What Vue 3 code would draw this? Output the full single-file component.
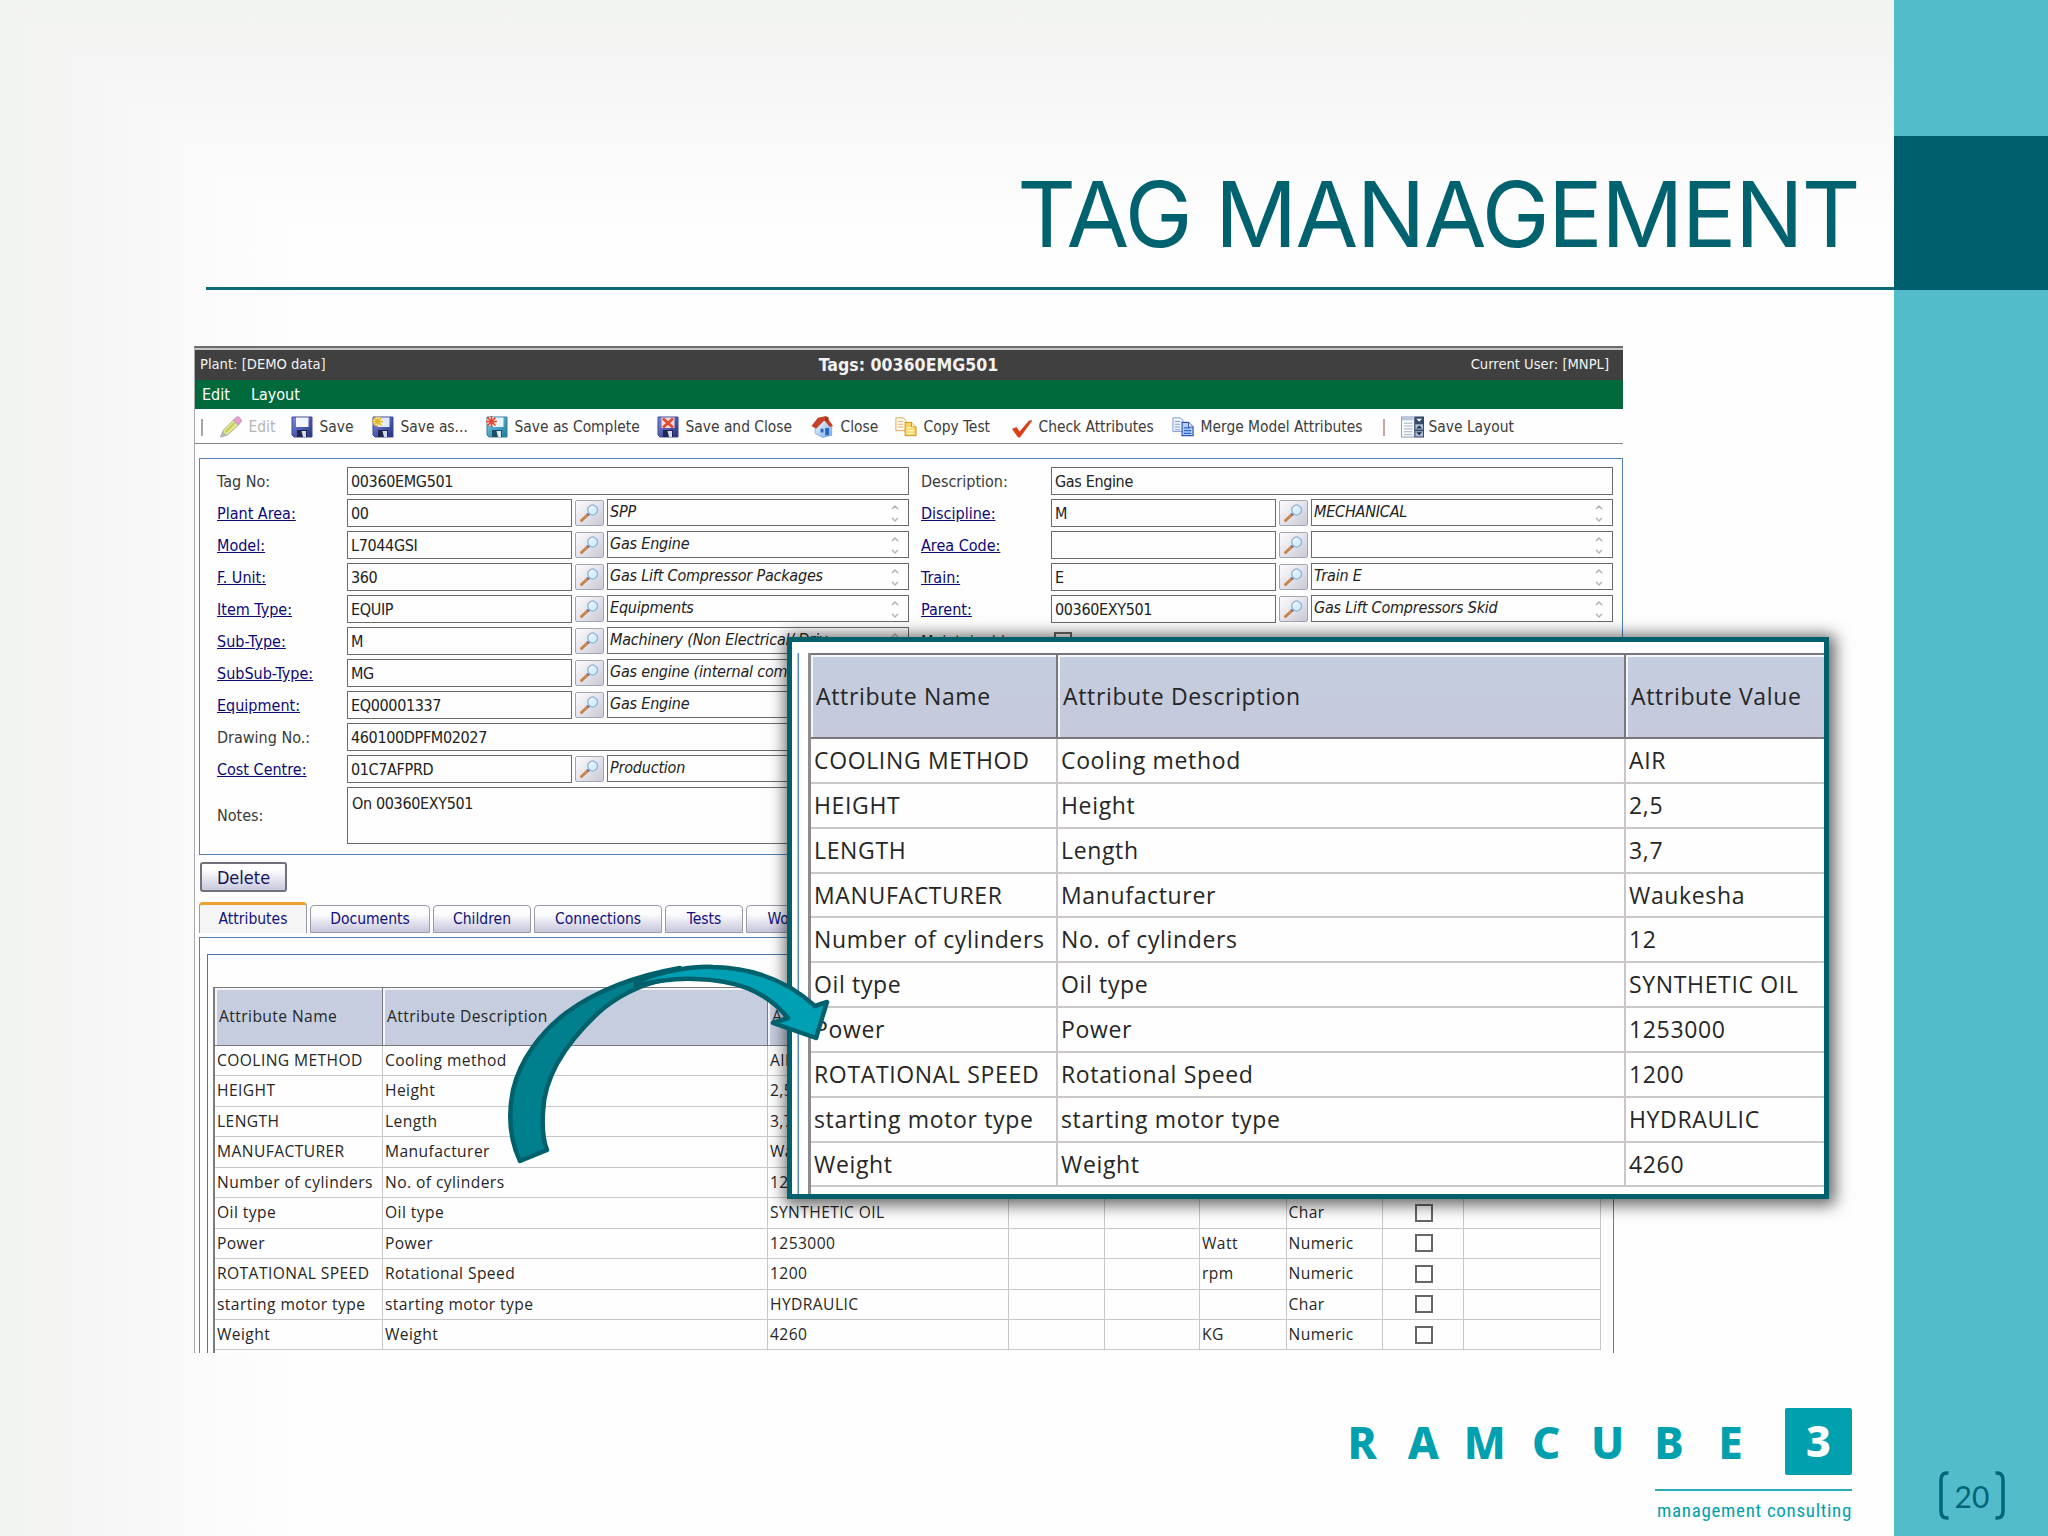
<template>
  <div class="slide">
    <!-- shared icon shapes -->
    <svg class="symbols" aria-hidden="true">
      <defs>
        <linearGradient id="disk" x1="0" y1="0" x2="1" y2="1">
          <stop offset="0" stop-color="#7d8ae0" />
          <stop offset="1" stop-color="#23307f" />
        </linearGradient>
        <linearGradient id="disk-teal" x1="0" y1="0" x2="1" y2="1">
          <stop offset="0" stop-color="#7fd0e6" />
          <stop offset="1" stop-color="#1c7a9c" />
        </linearGradient>
        <linearGradient id="house" x1="0" y1="0" x2="1" y2="1">
          <stop offset="0" stop-color="#ffffff" />
          <stop offset="1" stop-color="#6fa6e6" />
        </linearGradient>
      </defs>
      <symbol id="icon-edit" viewBox="0 0 22 22">
        <path d="M1 21 L4 14 L14 4 L19 9 L8 19 Z" fill="#e4ea8c" stroke="#a9a9a0" />
        <path d="M14 4 L17 1 Q20 0 21 3 L22 5 L19 9 Z" fill="#eb9ad6" stroke="#b79ab5" />
        <path d="M6 16 L16 6" stroke="#c2cb5c" stroke-width="2" />
        <path d="M1 21 L3.5 15.5 L7 19 Z" fill="#b5b5b5" />
      </symbol>
      <symbol id="icon-save" viewBox="0 0 22 22">
        <path d="M1 1 H21 V21 H3 L1 19 Z" fill="url(#disk)" stroke="#3a4696" />
        <path d="M5 1.500 H17.500 V11 H5 Z" fill="#f2f5fd" />
        <path d="M6 14 H16 V21 H6 Z" fill="#20264f" />
        <path d="M10.500 15 H15 V21 H12 Z" fill="#d5dbe8" />
      </symbol>
      <symbol id="icon-save-as" viewBox="0 0 22 22">
        <path d="M1 1 H21 V21 H3 L1 19 Z" fill="url(#disk)" stroke="#3a4696" />
        <path d="M5 1.500 H17.500 V11 H5 Z" fill="#e3ebfa" />
        <path d="M6 14 H16 V21 H6 Z" fill="#20264f" />
        <path d="M10.500 15 H15 V21 H12 Z" fill="#d5dbe8" />
        <circle cx="5.500" cy="5.500" r="4.500" fill="#fdf3b0" />
        <path d="M5.500 0 V11 M0 5.500 H11 M1.500 1.500 L9.500 9.500 M9.500 1.500 L1.500 9.500" stroke="#e3b72c" stroke-width="1.500" />
      </symbol>
      <symbol id="icon-save-complete" viewBox="0 0 22 22">
        <path d="M1 1 H21 V21 H3 L1 19 Z" fill="url(#disk-teal)" stroke="#347e9c" />
        <path d="M7 1.500 H17.500 V11 H7 Z" fill="#e6f5fa" />
        <path d="M6 14 H16 V21 H6 Z" fill="#1d4d66" />
        <path d="M10.500 15 H15 V21 H12 Z" fill="#dcebf0" />
        <circle cx="5.500" cy="5.500" r="4.500" fill="#fbe3d8" />
        <path d="M5.500 0 V11 M0 5.500 H11 M1.500 1.500 L9.500 9.500 M9.500 1.500 L1.500 9.500" stroke="#e0452f" stroke-width="1.600" />
      </symbol>
      <symbol id="icon-save-close" viewBox="0 0 22 22">
        <path d="M1 1 H21 V21 H3 L1 19 Z" fill="url(#disk)" stroke="#3a4696" />
        <path d="M4.500 1.500 H17.500 V12 H4.500 Z" fill="#f4dcd6" />
        <path d="M6 2.500 L16 11.500 M16 2.500 L6 11.500" stroke="#e2442c" stroke-width="2.600" />
        <path d="M6 14 H16 V21 H6 Z" fill="#20264f" />
        <path d="M10.500 15 H15 V21 H12 Z" fill="#d5dbe8" />
      </symbol>
      <symbol id="icon-home" viewBox="0 0 24 24">
        <path d="M4 11 L13 4 L22 12 V21 L12 23.500 L4 19 Z" fill="url(#house)" stroke="#6d9bd6" stroke-width=".7" />
        <path d="M0 11 L7 2 L16 0 L23.500 11 L20 12 L14 5 L5 14 Z" fill="#c5422a" />
        <path d="M15 1 H18.500 V5 H15 Z" fill="#a8321e" />
        <path d="M10 14 H13 V18 H10 Z M15 13 H19 V21 H15 Z" fill="#2464c0" />
      </symbol>
      <symbol id="icon-copy" viewBox="0 0 24 22">
        <path d="M1 1 H9 L12 4 V15 H1 Z" fill="#fffaf0" stroke="#d8a24e" />
        <path d="M3 5 H9 M3 8 H9 M3 11 H9" stroke="#dba968" />
        <path d="M11 6 H18 L23 11 V20.500 H11 Z" fill="#fbd45e" stroke="#c98f1c" />
        <path d="M18 6 V11 H23" fill="#fff0b8" stroke="#c98f1c" />
        <path d="M13 12 H20 M13 15 H21 M13 18 H21" stroke="#fff6cf" stroke-width="1.300" />
      </symbol>
      <symbol id="icon-check" viewBox="0 0 20 22">
        <path d="M0.500 13 L4.500 11.500 L7.500 16 L17 5 L20 4.500 L8 21 L6 21 Z" fill="#e23c14" stroke="#c23a14" stroke-width=".6" />
      </symbol>
      <symbol id="icon-merge" viewBox="0 0 24 22">
        <path d="M1 1 H9 L12 4 V16 H1 Z" fill="#f1f6ff" stroke="#7793cf" />
        <path d="M3 5 H9 M3 8 H9 M3 11 H9 M3 14 H9" stroke="#6f94da" />
        <path d="M11 6 H18 L23 11 V20.500 H11 Z" fill="#b5d0fa" stroke="#2d55b0" stroke-width="1.300" />
        <path d="M18 6 V11 H23" fill="#eaf2ff" stroke="#2d55b0" />
        <path d="M13 12 H20 M13 15 H21 M13 18 H21" stroke="#2f62c8" stroke-width="1.300" />
      </symbol>
      <symbol id="icon-layout" viewBox="0 0 24 22">
        <path d="M.5 .5 H14 V21.500 H.5 Z" fill="#fbfcfe" stroke="#8a96ad" />
        <path d="M1 2.500 H13" stroke="#b7c5dc" stroke-width="3" />
        <path d="M3 7 H12 M3 10 H12 M3 13 H12 M3 16 H12 M3 19 H12" stroke="#9cacc8" />
        <path d="M14 0 H24 V22 H14 Z" fill="#35496b" />
        <path d="M15 8 H23 V13.500 H15 Z M15 15.500 H23 V21 H15 Z" fill="#a9bcd4" />
        <path d="M16 2.500 H22 L19 5.500 Z" fill="#fff" />
        <path d="M16 12.500 H22 L19 9.500 Z M16 16.500 H22 L19 19.500 Z" fill="#1c2a44" />
      </symbol>
      <symbol id="icon-search" viewBox="0 0 19 18">
        <path d="M1.500 16.500 L8.500 10" stroke="#c98546" stroke-width="3" stroke-linecap="round" />
        <path d="M7.500 11 L9.500 9.200" stroke="#6a6e86" stroke-width="2.600" />
        <circle cx="12.600" cy="6" r="4.900" fill="#d2f0fd" stroke="#9fb6d6" stroke-width="1.500" />
        <path d="M10 5 Q11 3 13 3" fill="none" stroke="#fff" stroke-width="1.500" />
      </symbol>
      <symbol id="icon-spin" viewBox="0 0 8 18">
        <path d="M1 4.500 L4 1.500 L7 4.500 M1 13.500 L4 16.500 L7 13.500" fill="none" stroke="#b4b4b4" stroke-width="1.500" />
      </symbol>
    </svg>

    <main class="main">
      <header class="slide-header">
        <h1>TAG MANAGEMENT</h1>
      </header>

      <section class="window">
        <div class="title-bar">
          <span class="plant">Plant: [DEMO data]</span>
          <strong>Tags: 00360EMG501</strong>
          <span class="user">Current User: [MNPL]</span>
        </div>
        <nav class="menu-bar"><span>Edit</span><span>Layout</span></nav>
        <div class="toolbar">
          <i class="separator"></i>
          <div v-for="tool in tools" :key="tool.label" class="tool" :class="{ disabled: tool.disabled }" :style="{ width: tool.width + 'px' }">
            <svg class="tool-icon" :style="{ width: tool.size + 'px' }"><use :href="'#icon-' + tool.icon" /></svg>
            <span>{{ tool.label }}</span>
          </div>
          <i class="separator pink"></i>
          <div class="tool tight">
            <svg class="tool-icon layout"><use href="#icon-layout" /></svg>
            <span>Save Layout</span>
          </div>
        </div>

        <div class="form-panel">
          <div class="form-column">
            <div v-for="field in leftFields" :key="field.label" class="field">
              <label :class="{ link: field.lookup }">{{ field.label }}</label>
              <div class="input" :class="{ wide: !field.lookup }">{{ field.value }}</div>
              <template v-if="field.lookup">
                <button class="lookup"><svg><use href="#icon-search" /></svg></button>
                <div class="input desc"><em>{{ field.desc }}</em><svg><use href="#icon-spin" /></svg></div>
              </template>
            </div>
            <div class="field notes">
              <label>Notes:</label>
              <div class="input wide">On 00360EXY501</div>
            </div>
          </div>
          <div class="form-column">
            <div v-for="field in rightFields" :key="field.label" class="field">
              <label :class="{ link: field.lookup }">{{ field.label }}</label>
              <div class="input" :class="{ wide: !field.lookup }">{{ field.value }}</div>
              <template v-if="field.lookup">
                <button class="lookup"><svg><use href="#icon-search" /></svg></button>
                <div class="input desc"><em>{{ field.desc }}</em><svg><use href="#icon-spin" /></svg></div>
              </template>
            </div>
            <div class="field">
              <label>Maintainable:</label>
              <i class="box maintain"></i>
            </div>
          </div>
        </div>

        <button class="delete">Delete</button>

        <div class="tabs">
          <div v-for="tab in tabs" :key="tab.name" class="tab" :class="{ active: tab.active }" :style="{ width: tab.width + 'px' }">{{ tab.name }}</div>
        </div>

        <div class="tab-panel">
          <div class="inner-panel">
            <div class="grid">
              <div class="grid-row head">
                <span>Attribute Name</span><span>Attribute Description</span><span>Attribute Value</span>
                <span></span><span></span><span></span><span></span><span></span><span></span>
              </div>
              <div v-for="row in attributes" :key="row.name" class="grid-row">
                <span>{{ row.name }}</span>
                <span>{{ row.desc }}</span>
                <span>{{ row.value }}</span>
                <span></span>
                <span></span>
                <span>{{ row.unit }}</span>
                <span>{{ row.type }}</span>
                <span class="check"><i class="box"></i></span>
                <span></span>
              </div>
            </div>
          </div>
        </div>
      </section>

      <footer class="slide-footer">
        <div class="logo">
          <div class="logo-name">
            <span v-for="(letter, i) in 'RAMCUBE'" :key="i">{{ letter }}</span>
          </div>
          <div class="logo-cube">3</div>
        </div>
        <div class="tagline">management consulting</div>
      </footer>
    </main>

    <aside class="sidebar">
      <div class="sidebar-block"></div>
      <div class="page-number">
        <svg viewBox="0 0 10 49"><path d="M9.500 2 H8 Q2 2 2 9 V40 Q2 47 8 47 H9.500" /></svg>
        <span>20</span>
        <svg class="flip" viewBox="0 0 10 49"><path d="M9.500 2 H8 Q2 2 2 9 V40 Q2 47 8 47 H9.500" /></svg>
      </div>
    </aside>

    <!-- enlarged view of the attribute table -->
    <div class="callout">
      <div class="callout-grid">
        <div class="callout-row head">
          <span>Attribute Name</span><span>Attribute Description</span><span>Attribute Value</span>
        </div>
        <div v-for="row in attributes" :key="row.name" class="callout-row">
          <span>{{ row.name }}</span>
          <span>{{ row.desc }}</span>
          <span>{{ row.value }}</span>
        </div>
      </div>
    </div>

    <svg class="arrow" viewBox="500 950 340 220">
      <path class="arrow-tail" d="M520 1161 C510 1140 508 1115 513 1090 C520 1060 541 1032 566 1013 C600 988 640 975 680 968 L664 980 C640 984 615 998 598 1013 C565 1044 544 1078 543 1112 C542 1128 543 1140 547 1150 Z" />
      <path class="arrow-front" d="M636 982 C665 970 695 966 713 967 C760 968 793 986 815 1006 L827 1002 L816 1038 L773 1023 L788 1018 C765 990 735 980 695 979 C672 978 655 981 636 986 Z" />
    </svg>
  </div>
</template>

<script setup>
const tools = [
  { icon: 'edit', label: 'Edit', width: 72, size: 23, disabled: true },
  { icon: 'save', label: 'Save', width: 81, size: 22 },
  { icon: 'save-as', label: 'Save as...', width: 114, size: 22 },
  { icon: 'save-complete', label: 'Save as Complete', width: 171, size: 22 },
  { icon: 'save-close', label: 'Save and Close', width: 154, size: 22 },
  { icon: 'home', label: 'Close', width: 84, size: 23 },
  { icon: 'copy', label: 'Copy Test', width: 117, size: 22 },
  { icon: 'check', label: 'Check Attributes', width: 160, size: 20 },
  { icon: 'merge', label: 'Merge Model Attributes', width: 211, size: 22 },
];

const leftFields = [
  { label: 'Tag No:', value: '00360EMG501' },
  { label: 'Plant Area:', value: '00', lookup: true, desc: 'SPP' },
  { label: 'Model:', value: 'L7044GSI', lookup: true, desc: 'Gas Engine' },
  { label: 'F. Unit:', value: '360', lookup: true, desc: 'Gas Lift Compressor Packages' },
  { label: 'Item Type:', value: 'EQUIP', lookup: true, desc: 'Equipments' },
  { label: 'Sub-Type:', value: 'M', lookup: true, desc: 'Machinery (Non Electrical/ Driv' },
  { label: 'SubSub-Type:', value: 'MG', lookup: true, desc: 'Gas engine (internal com' },
  { label: 'Equipment:', value: 'EQ00001337', lookup: true, desc: 'Gas Engine' },
  { label: 'Drawing No.:', value: '460100DPFM02027' },
  { label: 'Cost Centre:', value: '01C7AFPRD', lookup: true, desc: 'Production' },
];

const rightFields = [
  { label: 'Description:', value: 'Gas Engine' },
  { label: 'Discipline:', value: 'M', lookup: true, desc: 'MECHANICAL' },
  { label: 'Area Code:', value: '', lookup: true, desc: '' },
  { label: 'Train:', value: 'E', lookup: true, desc: 'Train E' },
  { label: 'Parent:', value: '00360EXY501', lookup: true, desc: 'Gas Lift Compressors Skid' },
];

const tabs = [
  { name: 'Attributes', width: 108, active: true },
  { name: 'Documents', width: 120 },
  { name: 'Children', width: 98 },
  { name: 'Connections', width: 128 },
  { name: 'Tests', width: 78 },
  { name: 'Work', width: 78 },
];

const attributes = [
  { name: 'COOLING METHOD', desc: 'Cooling method', value: 'AIR' },
  { name: 'HEIGHT', desc: 'Height', value: '2,5' },
  { name: 'LENGTH', desc: 'Length', value: '3,7' },
  { name: 'MANUFACTURER', desc: 'Manufacturer', value: 'Waukesha' },
  { name: 'Number of cylinders', desc: 'No. of cylinders', value: '12' },
  { name: 'Oil type', desc: 'Oil type', value: 'SYNTHETIC OIL', type: 'Char' },
  { name: 'Power', desc: 'Power', value: '1253000', unit: 'Watt', type: 'Numeric' },
  { name: 'ROTATIONAL SPEED', desc: 'Rotational Speed', value: '1200', unit: 'rpm', type: 'Numeric' },
  { name: 'starting motor type', desc: 'starting motor type', value: 'HYDRAULIC', type: 'Char' },
  { name: 'Weight', desc: 'Weight', value: '4260', unit: 'KG', type: 'Numeric' },
];
</script>

<style>
body {
  margin: 0;
}
</style>

<style scoped>
.slide {
  position: relative;
  display: flex;
  width: 2048px;
  height: 1536px;
  overflow: hidden;
  background: #fefefe;
  font-family: "DejaVu Sans Condensed", "DejaVu Sans", sans-serif;
  font-stretch: condensed;
}
.slide * {
  box-sizing: border-box;
}
.symbols {
  position: absolute;
  width: 0;
  height: 0;
}
.main {
  width: 1894px;
  height: 1536px;
  background:
    linear-gradient(to right, #f2f4f1 0, #f5f6f5 100px, #f9faf9 190px, #fdfefd 300px, #fefefe 380px),
    linear-gradient(to bottom, #f2f4f1 0, #f5f6f5 80px, #f9faf9 150px, #fdfefd 240px, #fefefe 300px);
  background-blend-mode: darken;
}
.slide-header {
  display: flex;
  justify-content: flex-end;
  height: 290px;
  margin-left: 206px;
  padding: 159px 35px 0 0;
  border-bottom: 3px solid #0b6a75;
}
h1 {
  margin: 0;
  color: #00626e;
  font-family: Inter, sans-serif;
  font-size: 91px;
  font-weight: 400;
  line-height: 110px;
  letter-spacing: -1.600px;
  white-space: nowrap;
}

/* application window */
.window {
  width: 1429px;
  height: 1007px;
  margin: 56px 0 0 194px;
  overflow: hidden;
  background: #fefefe;
  border-top: 2px solid #6b6b6b;
  border-left: 1px solid #a9a9a9;
}
.title-bar {
  display: grid;
  grid-template-columns: 1fr auto 1fr;
  align-items: center;
  height: 32px;
  padding: 0 14px 3px 5px;
  background: #404040;
  border-top: 2px solid #c4c4c4;
  color: #f2f2f2;
  font-size: 14.600px;
}
.title-bar strong {
  padding: 2px 0 0 8px;
  font-size: 17.600px;
}
.title-bar .user {
  text-align: right;
}
.menu-bar {
  display: flex;
  gap: 21px;
  align-items: center;
  height: 29px;
  padding: 0 7px;
  background: #006a3c;
  color: #fff;
  font-size: 16px;
}
.toolbar {
  display: flex;
  align-items: center;
  width: 1429px;
  height: 35px;
  padding-top: 2px;
  border-bottom: 1.500px solid #858585;
  color: #3c3c3c;
  font-size: 15.400px;
}
.separator {
  width: 1.500px;
  height: 17px;
  margin: 0 16px 0 6px;
  background: #a5a5a5;
}
.separator.pink {
  width: 2px;
  margin: 0 16px 0 0;
  background: #c9a6a6;
}
.tool {
  display: flex;
  gap: 7px;
  align-items: center;
  flex: none;
  white-space: nowrap;
}
.tool.tight {
  gap: 5px;
}
.tool.disabled {
  color: #b4b4b4;
}
.tool-icon {
  flex: none;
  height: 22px;
}
.tool-icon.layout {
  width: 23px;
}

.form-panel {
  display: flex;
  gap: 12px;
  width: 1424px;
  height: 397px;
  margin: 14px 0 0 4px;
  padding: 8px 0 0 17px;
  border: 1.500px solid #5482b4;
}
.form-column {
  display: flex;
  flex-direction: column;
  flex: none;
  gap: 4px;
  width: 692px;
}
.field {
  display: flex;
  gap: 3px;
  height: 28px;
  color: #222;
  font-size: 16px;
}
.field label {
  width: 127px;
  line-height: 30px;
  color: #3a3a3a;
  white-space: nowrap;
}
.field label.link {
  color: #0d0878;
  text-decoration: underline;
}
.input {
  width: 225px;
  height: 28px;
  padding-left: 3px;
  border: 1.500px solid #6a6a6a;
  line-height: 28px;
  letter-spacing: -0.350px;
  white-space: nowrap;
  overflow: hidden;
}
.input.wide {
  width: 562px;
}
.input.desc {
  display: flex;
  justify-content: space-between;
  width: 302px;
  height: 27px;
  padding: 0 9px 0 2px;
  line-height: 24px;
  letter-spacing: -0.200px;
}
.input.desc svg {
  flex: none;
  width: 8px;
  height: 19px;
  margin-top: 4px;
}
.lookup {
  display: grid;
  place-items: center;
  width: 29px;
  height: 26px;
  margin-top: 1px;
  padding: 0;
  border: 1.500px solid #a5a5ae;
  border-radius: 2px;
  background: linear-gradient(135deg, #fdfdfe, #c9c9d8);
}
.lookup svg {
  width: 19px;
  height: 18px;
}
.field.notes {
  height: 57px;
}
.notes label {
  line-height: 58px;
}
.notes .input {
  height: 57px;
  padding-left: 4px;
  line-height: 31px;
}
.box {
  display: block;
  width: 18px;
  height: 18px;
  border: 2px solid #666;
}
.maintain {
  margin: 5px 0 0 3px;
}
.delete {
  display: block;
  width: 87px;
  height: 30px;
  margin: 7px 0 0 5px;
  padding: 0;
  border: 2px solid #70707a;
  border-radius: 3px;
  background: linear-gradient(#fff 20%, #c8c8de);
  color: #14145c;
  font-family: inherit;
  font-stretch: condensed;
  font-size: 18px;
}
.tabs {
  display: flex;
  gap: 3px;
  align-items: flex-end;
  height: 31px;
  margin: 10px 0 0 4px;
}
.tab {
  flex: none;
  height: 28px;
  border: 1.500px solid #9a9aa8;
  border-radius: 4px 4px 0 0;
  background: linear-gradient(#fdfdfe 30%, #c6c6dc);
  color: #12107c;
  font-size: 15.500px;
  line-height: 27px;
  text-align: center;
}
.tab.active {
  height: 31px;
  border-top: 3px solid #eda22f;
  border-bottom: 0;
  background: #f5f5f6;
  line-height: 29px;
}
.tab-panel {
  width: 1425px;
  height: 420px;
  margin: 4px 0 0 4px;
  padding: 16px 0 0 7px;
  border: 1.500px solid #5482b4;
  border-right: 0;
}
.inner-panel {
  width: 1407px;
  height: 420px;
  padding: 32px 0 0 5px;
  border: 1.500px solid #4d76a6;
  border-right-color: #777;
}

/* attribute table */
.grid {
  width: 1389px;
  height: 400px;
  border-left: 2px solid #7d7d80;
}
.grid-row {
  display: grid;
  grid-template-columns: 168px 385px 241px 95.500px 95.500px 86.500px 96px 81px 137px;
  height: 30.450px;
  color: #262626;
  font-family: "Open Sans", sans-serif;
  font-stretch: normal;
  font-size: 15.600px;
  line-height: 28.500px;
  letter-spacing: 0.420px;
}
.grid-row span {
  padding-left: 2px;
  border-right: 1.500px solid #cbc6c9;
  border-bottom: 1.500px solid #cbc6c9;
  white-space: nowrap;
}
.grid-row.head {
  height: 59px;
  border-top: 1.500px solid #77777c;
  line-height: 57px;
}
.grid-row.head span {
  padding-left: 4px;
  border-right-color: #77777c;
  border-bottom-color: #77777c;
  background: #c5cdde;
  box-shadow: inset 2px 2px 0 #f4f5f8;
}
.check {
  display: grid;
  place-items: center;
}

/* callout */
.callout {
  position: absolute;
  left: 787px;
  top: 637px;
  width: 1042px;
  height: 562px;
  padding: 11px 0 0 8px;
  overflow: hidden;
  border: 5px solid #00616c;
  background: #fefefe;
  box-shadow: 2px 2px 15px 4px rgba(0, 0, 0, 0.6);
}
.callout-grid {
  height: 560px;
  margin-left: 8px;
  border-left: 3px solid #8d8d90;
  box-shadow: -9px 0 0 #fefefe, -10.500px 0 0 #5a8cc4;
}
.callout-row {
  display: grid;
  grid-template-columns: 247px 568px 1fr;
  height: 44.850px;
  color: #262626;
  font-family: "Open Sans", sans-serif;
  font-stretch: normal;
  font-size: 23px;
  line-height: 43.500px;
  letter-spacing: 0.650px;
}
.callout-row span {
  height: 44.850px;
  padding-left: 3px;
  border-right: 2px solid #cbc6c9;
  border-bottom: 2px solid #cbc6c9;
  white-space: nowrap;
}
.callout-row span:last-child {
  border-right: 0;
}
.callout-row.head {
  height: 86px;
  border-top: 2px solid #77777c;
  line-height: 83px;
}
.callout-row.head span {
  height: 84px;
  padding-left: 5px;
  border-color: #77777c;
  background: linear-gradient(#c3cede, #c6c9dc);
  box-shadow: inset 2px 2px 0 #f4f5f8;
}

.arrow {
  position: absolute;
  left: 500px;
  top: 950px;
  width: 340px;
  height: 220px;
}
.arrow path {
  stroke: #00616c;
  stroke-width: 4.500;
  stroke-linejoin: round;
}
.arrow-tail {
  fill: #00808d;
}
.arrow-front {
  fill: #00a0b4;
}

/* footer */
.slide-footer {
  display: flex;
  flex-direction: column;
  align-items: flex-end;
  padding: 55px 42px 0 0;
  color: #00a0af;
}
.logo {
  display: flex;
  gap: 28px;
  align-items: center;
}
.logo-name {
  display: grid;
  grid-template-columns: repeat(7, 61.400px);
  width: 409px;
  font-family: "Noto Sans", sans-serif;
  font-weight: 800;
  font-size: 44px;
  line-height: 62px;
}
.logo-name span {
  display: flex;
  justify-content: center;
  width: 28px;
}
.logo-cube {
  width: 67px;
  height: 67px;
  border-radius: 2px;
  background: #00a0af;
  color: #fff;
  font-family: "Noto Sans", sans-serif;
  font-weight: 800;
  font-size: 43px;
  line-height: 66px;
  text-align: center;
}
.tagline {
  width: 197px;
  margin-top: 14px;
  padding-top: 6px;
  border-top: 2px solid #2aa9b7;
  font-family: Roboto, sans-serif;
  font-size: 19px;
  line-height: 28px;
  letter-spacing: 0.680px;
  text-align: right;
  white-space: nowrap;
}

.sidebar {
  display: flex;
  flex-direction: column;
  justify-content: space-between;
  width: 154px;
  padding: 136px 0 16px;
  background: #53bccb;
}
.sidebar-block {
  height: 154px;
  background: #005f6e;
}
.page-number {
  display: flex;
  align-items: center;
  justify-content: space-between;
  width: 66px;
  height: 49px;
  margin-left: 45px;
  color: #00647a;
  font-family: Lato, sans-serif;
  font-size: 30px;
}
.page-number svg {
  width: 10px;
  height: 49px;
  fill: none;
  stroke: #00647a;
  stroke-width: 3.500;
}
.page-number .flip {
  transform: scaleX(-1);
}
</style>
